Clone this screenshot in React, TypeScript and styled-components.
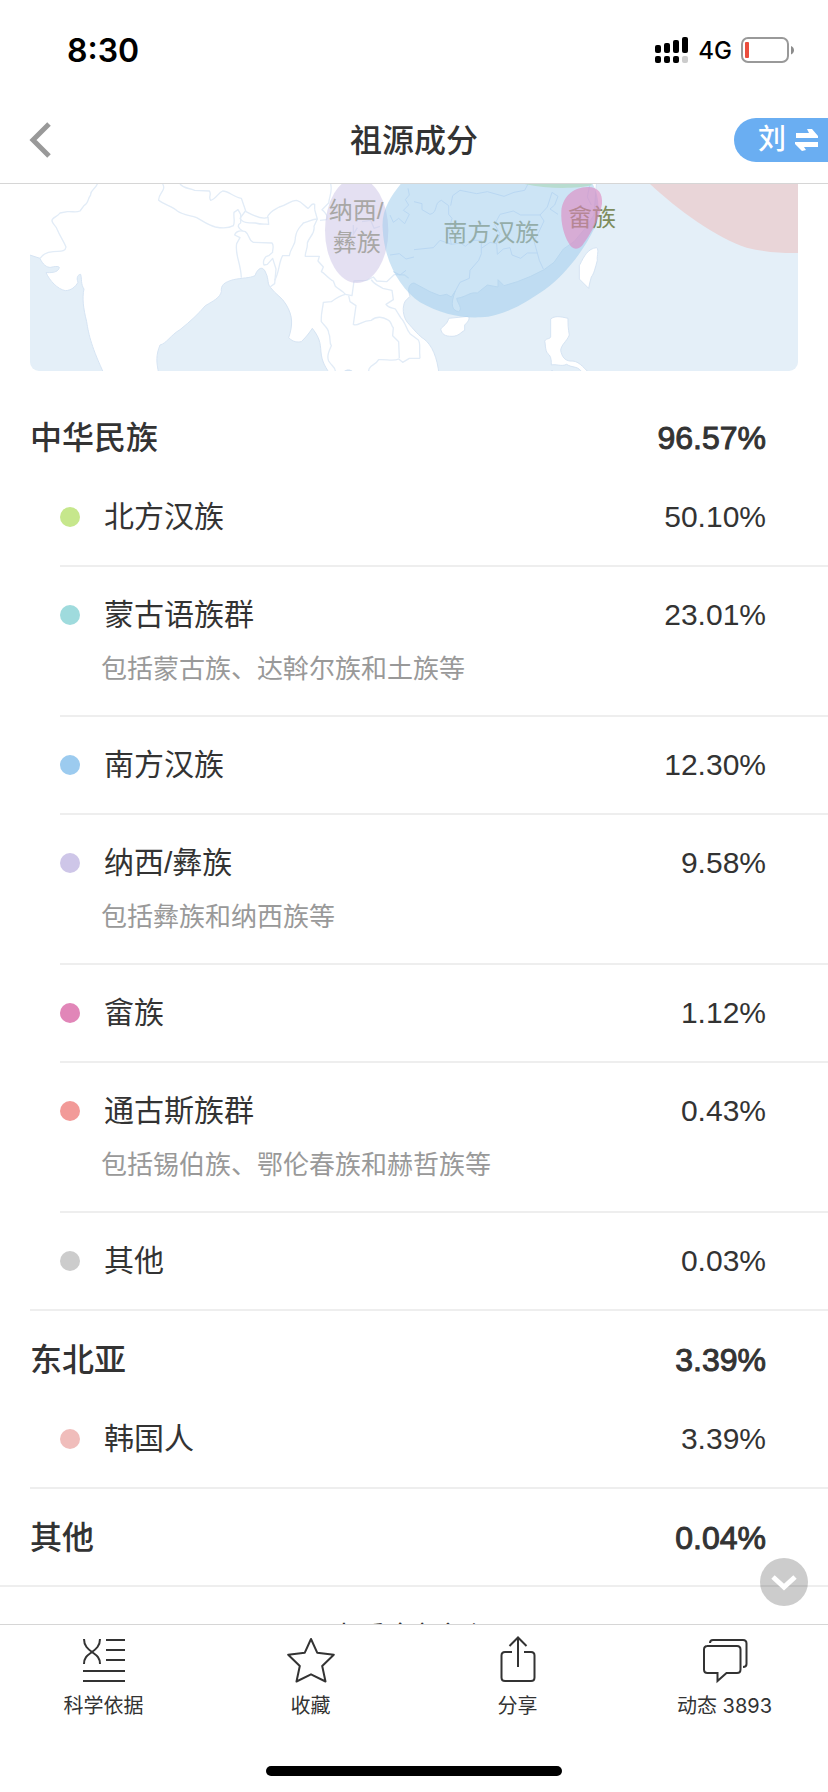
import React from "react";
import styled, { createGlobalStyle } from "styled-components";

const sans = `"Liberation Sans", "Noto Sans CJK SC", sans-serif`;
const ui = `Inter, "Noto Sans CJK SC", sans-serif`;

const GlobalStyle = createGlobalStyle`
  * { box-sizing: border-box; }
  body { margin: 0; background: #fff; color: #333; font-family: ${sans}; }
  h1, h2, p, ul { margin: 0; padding: 0; }
  button, a { font: inherit; color: inherit; text-decoration: none; }
  button { border: 0; padding: 0; background: none; cursor: pointer; }
  svg { display: block; }
`;

const Screen = styled.div`
  display: flex;
  flex-direction: column;
  height: 100vh;
  overflow: hidden;
`;

const StatusBar = styled.div`
  flex: none;
  display: flex;
  align-items: center;
  justify-content: space-between;
  height: 96px;
  padding: 4px 34px 0 67px;
  color: #000;
  font-family: ${ui};
`;

const Clock = styled.time`
  font-size: 32px;
  font-weight: 600;
`;

const StatusIcons = styled.div`
  display: flex;
  align-items: center;
  gap: 9px;
`;

const Network = styled.span`
  font-size: 24px;
  font-weight: 500;
`;

const NavBar = styled.header`
  flex: none;
  display: grid;
  grid-template-columns: 1fr auto 1fr;
  align-items: center;
  height: 88px;
  border-bottom: 1px solid #d6d6d6;
`;

const BackButton = styled.button`
  justify-self: start;
  padding: 8px 28px;
`;

const Title = styled.h1`
  padding-top: 3px;
  font-size: 32px;
  line-height: 44px;
  font-weight: 500;
`;

const SwitchButton = styled.button`
  justify-self: end;
  display: flex;
  align-items: center;
  gap: 9px;
  height: 44px;
  padding: 0 9px 0 24px;
  border-radius: 22px 0 0 22px;
  background: #6aaef2;
  color: #fff;
  font-size: 28px;
  font-weight: 500;
  line-height: 44px;
`;

const Viewport = styled.div`
  position: relative;
  flex: 1;
  min-height: 0;
`;

const Content = styled.main`
  height: 100%;
  overflow: hidden;
`;

const MapFrame = styled.div`
  margin: 0 30px 18px;
  border-radius: 0 0 9px 9px;
  overflow: hidden;
`;

const Section = styled.section<{ $last?: boolean }>`
  margin-left: ${(p) => (p.$last ? 0 : 30)}px;
  padding-left: ${(p) => (p.$last ? 30 : 0)}px;
  border-bottom: 2px solid #eee;
`;

const SectionHead = styled.div<{ $alone?: boolean }>`
  display: flex;
  align-items: center;
  justify-content: space-between;
  height: ${(p) => (p.$alone ? 96 : 80)}px;
  padding: ${(p) => (p.$alone ? 2 : 18)}px 62px 0 0;
  font-size: 32px;
`;

const SectionName = styled.h2`
  font-size: 32px;
  line-height: 48px;
  font-weight: 500;
`;

const SectionValue = styled.span`
  -webkit-text-stroke: 1px #333;
`;

const Groups = styled.ul`
  list-style: none;
  margin-left: 30px;
`;

const Group = styled.li`
  padding-right: 62px;
  & + & { border-top: 2px solid #eee; }
`;

const GroupLine = styled.div`
  display: flex;
  align-items: center;
  height: 96px;
  font-size: 30px;
`;

const Dot = styled.span<{ $color: string }>`
  width: 20px;
  height: 20px;
  margin-right: 24px;
  border-radius: 50%;
  background: ${(p) => p.$color};
`;

const GroupName = styled.span`
  flex: 1;
  line-height: 44px;
`;

const Note = styled.p`
  height: 52px;
  margin: -14px 0 14px 41px;
  color: #999;
  font-size: 26px;
  line-height: 40px;
`;

const MoreLink = styled.a`
  display: block;
  padding: 31px 0;
  font-size: 28px;
  line-height: 40px;
  text-align: center;
`;

const ScrollButton = styled.button`
  position: absolute;
  right: 20px;
  bottom: 18px;
  display: grid;
  place-items: center;
  width: 48px;
  height: 48px;
  border-radius: 50%;
  background: rgba(0, 0, 0, 0.2);
`;

const TabBar = styled.nav`
  flex: none;
  display: grid;
  grid-template-columns: repeat(4, 1fr);
  height: 142px;
  border-top: 1px solid #d6d6d6;
  font-family: ${ui};
`;

const Tab = styled.button`
  display: flex;
  flex-direction: column;
  align-items: center;
  gap: 3px;
  padding-top: 11px;
  font-size: 20px;
  line-height: 30px;
`;

const HomeArea = styled.div`
  flex: none;
  display: flex;
  justify-content: center;
  height: 26px;
`;

const HomeIndicator = styled.div`
  width: 296px;
  height: 10px;
  border-radius: 5px;
  background: #000;
`;

type Item = { name: string; value: string; color: string; note?: string };
type Region = { name: string; value: string; items: Item[] };

const regions: Region[] = [
  {
    name: "中华民族",
    value: "96.57%",
    items: [
      { name: "北方汉族", value: "50.10%", color: "#c6e78c" },
      { name: "蒙古语族群", value: "23.01%", color: "#9fdbdd", note: "包括蒙古族、达斡尔族和土族等" },
      { name: "南方汉族", value: "12.30%", color: "#9ccbef" },
      { name: "纳西/彝族", value: "9.58%", color: "#cec6e8", note: "包括彝族和纳西族等" },
      { name: "畲族", value: "1.12%", color: "#e186b8" },
      { name: "通古斯族群", value: "0.43%", color: "#f29a98", note: "包括锡伯族、鄂伦春族和赫哲族等" },
      { name: "其他", value: "0.03%", color: "#cccccc" },
    ],
  },
  {
    name: "东北亚",
    value: "3.39%",
    items: [{ name: "韩国人", value: "3.39%", color: "#f0bdbb" }],
  },
  { name: "其他", value: "0.04%", items: [] },
];

const SignalIcon = () => (
  <svg width="34" height="28" viewBox="0 0 34 28" aria-hidden="true">
    <rect x="0" y="9" width="6" height="8" rx="2" />
    <rect x="9" y="7" width="6" height="10" rx="2" />
    <rect x="18" y="4" width="6" height="13" rx="2" />
    <rect x="27" y="1" width="6" height="16" rx="2" />
    <rect x="0" y="20" width="6" height="7" rx="2" />
    <rect x="9" y="20" width="6" height="7" rx="2" />
    <rect x="18" y="20" width="6" height="7" rx="2" />
    <rect x="27" y="20" width="6" height="7" rx="2" fill="#ccc" />
  </svg>
);

const BatteryIcon = () => (
  <svg width="53" height="26" viewBox="0 0 53 26" aria-hidden="true">
    <rect x="1" y="1" width="46" height="24" rx="6" fill="none" stroke="#999" strokeWidth="2" />
    <path d="M50 9c4 1.500 4 7 0 8.500z" fill="#8c8c8c" />
    <rect x="4" y="5" width="4" height="16" rx="1" fill="#ea4d3d" />
  </svg>
);

const land =
  "M80 17V237L120 250C128 268 140 278 152 277C162 275 174 272 178 277C176 288 166 294 138 293C150 318 172 342 196 347C214 346 226 336 234 322C228 308 234 298 242 298C246 312 242 328 252 342C246 370 250 400 260 440C266 480 276 520 313 598H477C468 560 468 540 480 510C500 505 512 480 540 464C570 440 596 416 616 392C640 378 660 368 664 350C662 330 672 322 700 314C728 308 748 310 765 302C774 276 790 272 798 295C806 310 802 330 812 338C828 360 846 366 858 388C880 424 878 452 866 488C880 502 892 502 904 500C920 484 926 476 937 460C952 480 960 494 962 520C964 550 968 566 991 598H1317C1312 548 1296 510 1272 492C1258 484 1240 462 1222 442C1208 424 1206 394 1216 378L1230 364C1222 342 1226 326 1242 324L1290 350L1320 362L1340 358L1354 366L1366 348C1350 390 1356 406 1376 410C1390 402 1372 384 1370 370C1400 366 1408 350 1432 354L1462 330L1494 336V314L1512 332L1552 320L1592 304L1632 284L1662 262L1690 222L1722 200L1754 162L1782 120L1790 17Z";

const AncestryMap = () => (
  <svg viewBox="90 27 2304 561" width="100%" role="img" aria-label="祖源分布地图">
    <rect x="90" y="27" width="2304" height="561" fill="#e4eff8" />
    <g fill="#fff" stroke="#d6e4f3" strokeWidth="3" strokeLinejoin="round">
      <path d={land} />
      <path d="M1740 268C1752 244 1764 220 1790 218C1798 226 1790 240 1792 256C1786 278 1782 296 1774 306C1770 318 1768 330 1766 340L1738 312V270Z" />
      <path d="M1346 430L1404 424C1412 430 1404 440 1394 450V466C1382 472 1376 484 1356 484C1334 484 1326 478 1322 462C1330 452 1342 448 1346 430Z" />
      <path d="M1652 432C1664 422 1680 424 1704 430C1704 446 1704 460 1708 480C1700 500 1684 508 1682 526C1686 546 1694 556 1710 558C1736 556 1746 574 1770 596H1748C1736 570 1716 580 1700 568C1684 576 1668 566 1654 570C1654 560 1654 548 1648 540C1634 530 1638 514 1634 498C1640 488 1648 494 1652 486Z" />
      <path d="M1652 590l4-5 5 5z" />
    </g>
    <path d="M1033 588c4-6 20-6 24 0z" fill="#d6e4f3" />
    <g fill="none" stroke="#e2ecf7" strokeWidth="4" strokeLinejoin="round">
      <path d="M292 27C286 42 270 46 272 60C262 72 266 86 252 92L240 108C226 114 216 108 202 110L180 114C172 126 154 128 156 138C158 148 168 152 172 164C180 184 190 196 198 216C196 232 180 228 160 230C136 232 128 240 120 250" />
      <path d="M488 27C500 46 474 56 476 76C494 90 518 94 532 108C552 122 572 120 590 128C606 136 622 150 646 156C668 160 690 158 700 152C706 140 700 128 702 112L714 104L722 118V144C710 150 714 160 728 168" />
      <path d="M540 27C552 42 566 38 584 46L628 48C636 58 624 66 632 76C648 72 654 54 668 48C686 48 700 66 724 70C730 86 732 94 738 110C760 122 784 134 802 128C806 110 824 104 838 96C862 90 870 76 890 76C906 80 912 92 924 100C932 96 934 82 944 88V104" />
      <path d="M736 108L720 130C726 144 744 144 766 144C786 150 798 146 806 148L804 126" />
      <path d="M724 308C722 260 704 240 710 206L720 188L704 180C708 166 724 166 736 170C750 180 744 196 760 202L816 204C824 214 816 226 818 232L806 242C792 244 788 262 792 270L802 268L818 250L828 282L824 326L810 336" />
      <path d="M824 316C838 292 836 262 848 242H868C872 216 888 210 886 188C890 160 900 158 910 144C928 140 936 132 952 132L944 104" />
      <path d="M952 132L942 154C946 176 928 184 922 204C924 222 914 232 916 244H958L954 258L970 276L964 290C976 296 986 312 1000 318L1006 334C1016 344 1028 346 1036 358C1018 362 1002 374 994 380L970 382C968 404 962 416 964 440C972 452 986 460 986 474C994 490 986 502 994 512C986 530 980 544 986 558C994 572 1006 576 1006 588" />
      <path d="M992 27C998 50 988 64 986 84L966 104C976 114 984 120 980 134L960 136" />
      <path d="M1036 358L1056 362L1062 318L1100 316L1120 306L1130 318L1160 320L1184 298L1214 300L1226 310" />
      <path d="M1114 314C1122 330 1136 330 1148 340L1176 346L1180 374L1158 388C1166 400 1178 398 1186 402L1202 428C1216 440 1218 462 1230 476L1254 494C1264 506 1256 516 1260 550" />
      <path d="M1046 362L1050 380L1068 392L1060 448C1074 456 1084 436 1114 436C1130 422 1150 426 1162 434C1176 438 1172 452 1180 458L1178 482L1196 500L1198 550" />
      <path d="M1106 588C1106 570 1126 572 1136 554C1158 552 1180 560 1196 552L1208 562L1228 550H1260" />
      <path d="M1060 150V178L1072 158M1086 140L1112 136L1122 160L1140 154" />
    </g>
    <ellipse cx="1070" cy="166" rx="95" ry="158" fill="#c9c1e5" fillOpacity=".5" />
    <path d="M1202 27C1172 64 1144 106 1148 160C1152 260 1200 340 1260 382C1320 416 1380 430 1442 427C1510 424 1576 384 1634 344C1700 296 1752 224 1784 158C1800 116 1800 64 1778 27Z" fill="#99c9eb" fillOpacity=".5" />
    <g fill="none" stroke="#b9d7f2" strokeWidth="3" strokeLinejoin="round">
      <path d="M1242 80L1266 86V104L1290 118C1316 112 1300 84 1324 76L1346 92V118L1356 130L1346 168L1354 208L1320 196L1300 218L1242 224" />
      <path d="M1352 92L1358 62L1380 46L1430 56L1462 50L1512 64L1542 52L1574 46L1584 27" />
      <path d="M1354 208L1382 204L1396 214L1418 196H1444V236L1436 256L1410 286L1408 310L1380 322L1366 348" />
      <path d="M1444 220L1470 202L1490 206L1492 238L1510 222L1530 218L1536 240L1562 250L1582 234H1612L1618 256L1630 282" />
      <path d="M1490 206L1500 176L1484 148L1500 118L1540 108L1562 120H1620L1632 138L1618 168L1602 198L1612 234" />
      <path d="M1656 52L1674 64L1664 90L1650 102L1674 118M1620 120L1642 96L1656 52" />
      <path d="M1224 40L1228 60L1216 74L1226 90L1210 106L1228 118L1214 146L1196 130L1180 142L1170 120M1170 240L1198 236L1218 252L1242 246M1180 290L1200 300L1218 286" />
      <path d="M1770 27L1762 66L1774 90" />
    </g>
    <path d="M1574 27C1640 42 1730 42 1776 30L1774 27Z" fill="#b8dcd0" />
    <path d="M1950 27C2030 102 2150 190 2240 218C2300 232 2350 235 2394 234V27Z" fill="#e9d5d8" />
    <g fontFamily='"Liberation Sans", "Noto Sans CJK SC", sans-serif' fontSize="72">
      <text x="986" y="133" fill="#a8a7a5">纳西/</text>
      <text x="998" y="229" fill="#a8a7a5">彝族</text>
      <text x="1330" y="198" fill="#94ada9">南方汉族</text>
      <text x="1704" y="154" fill="#7d8c5c">畲族</text>
    </g>
    <path d="M1684 110C1686 70 1716 36 1764 36C1796 36 1808 56 1806 86C1800 132 1768 182 1746 212C1732 226 1716 224 1706 204C1692 180 1682 144 1684 110Z" fill="#df83bd" fillOpacity=".58" />
  </svg>
);

const iconProps = {
  width: 48,
  height: 52,
  viewBox: "0 0 48 52",
  fill: "none",
  stroke: "#333",
  strokeWidth: 2,
  "aria-hidden": true,
} as const;

const ScienceIcon = () => (
  <svg {...iconProps}>
    <path d="M4 3C4 10 8 13 12 16S20 21 20 28M20 3C20 10 16 13 12 16S4 21 4 28M26 4H45M26 14H45M26 24H45M3 35H45M3 45H45" />
  </svg>
);

const StarIcon = () => (
  <svg {...iconProps}>
    <path
      strokeLinejoin="round"
      d="M24 3L30.200 16.700L46.800 18.700L35.200 30L38.500 45.500L24 38.300L9.500 45.500L12.800 30L1.200 18.700L17.800 16.700Z"
    />
  </svg>
);

const ShareIcon = () => (
  <svg {...iconProps}>
    <path d="M24 31V2M15.500 10L24 1.500L32.500 10M18 16H11Q7.500 16 7.500 19.500V41.500Q7.500 45 11 45H37Q40.500 45 40.500 41.500V19.500Q40.500 16 37 16H30" />
  </svg>
);

const FeedIcon = () => (
  <svg {...iconProps}>
    <path d="M6 10H36Q39.500 10 39.500 13.500V33.500Q39.500 37 36 37H25.500L16.500 45V37H6.500Q3 37 3 33.500V13.500Q3 10 6.500 10M9 7Q9 4 12 4H42Q45.500 4 45.500 7.500V28Q45.500 31 42 31" />
  </svg>
);

const tabs = [
  { label: "科学依据", Icon: ScienceIcon },
  { label: "收藏", Icon: StarIcon },
  { label: "分享", Icon: ShareIcon },
  { label: "动态 3893", Icon: FeedIcon },
];

export default function App() {
  return (
    <Screen>
      <GlobalStyle />
      <StatusBar>
        <Clock>8:30</Clock>
        <StatusIcons>
          <SignalIcon />
          <Network>4G</Network>
          <BatteryIcon />
        </StatusIcons>
      </StatusBar>
      <NavBar>
        <BackButton aria-label="返回">
          <svg width="24" height="36" viewBox="0 0 24 36" fill="none" stroke="#999" strokeWidth="5">
            <path d="M21 2L5 18L21 34" />
          </svg>
        </BackButton>
        <Title>祖源成分</Title>
        <SwitchButton>
          刘
          <svg width="24" height="24" viewBox="0 0 24 24" fill="#fff" aria-hidden="true">
            <path d="M1 5H14L12 1H17L23 8V10H1ZM23 14H0V16L7 23L11 22L9 19H23Z" />
          </svg>
        </SwitchButton>
      </NavBar>
      <Viewport>
        <Content>
          <MapFrame>
            <AncestryMap />
          </MapFrame>
          {regions.map((region, i) => (
            <Section key={i} $last={i === regions.length - 1}>
              <SectionHead $alone={region.items.length === 0}>
                <SectionName>{region.name}</SectionName>
                <SectionValue>{region.value}</SectionValue>
              </SectionHead>
              {region.items.length > 0 && (
                <Groups>
                  {region.items.map((item) => (
                    <Group key={item.name}>
                      <GroupLine>
                        <Dot $color={item.color} />
                        <GroupName>{item.name}</GroupName>
                        <span>{item.value}</span>
                      </GroupLine>
                      {item.note && <Note>{item.note}</Note>}
                    </Group>
                  ))}
                </Groups>
              )}
            </Section>
          ))}
          <MoreLink href="#all">查看全部祖源</MoreLink>
        </Content>
        <ScrollButton aria-label="向下滚动">
          <svg width="26" height="18" viewBox="0 0 26 18" fill="none" stroke="#fff" strokeWidth="5">
            <path d="M2 4L13 14L24 4" />
          </svg>
        </ScrollButton>
      </Viewport>
      <TabBar>
        {tabs.map(({ label, Icon }) => (
          <Tab key={label}>
            <Icon />
            <span>{label}</span>
          </Tab>
        ))}
      </TabBar>
      <HomeArea>
        <HomeIndicator />
      </HomeArea>
    </Screen>
  );
}
